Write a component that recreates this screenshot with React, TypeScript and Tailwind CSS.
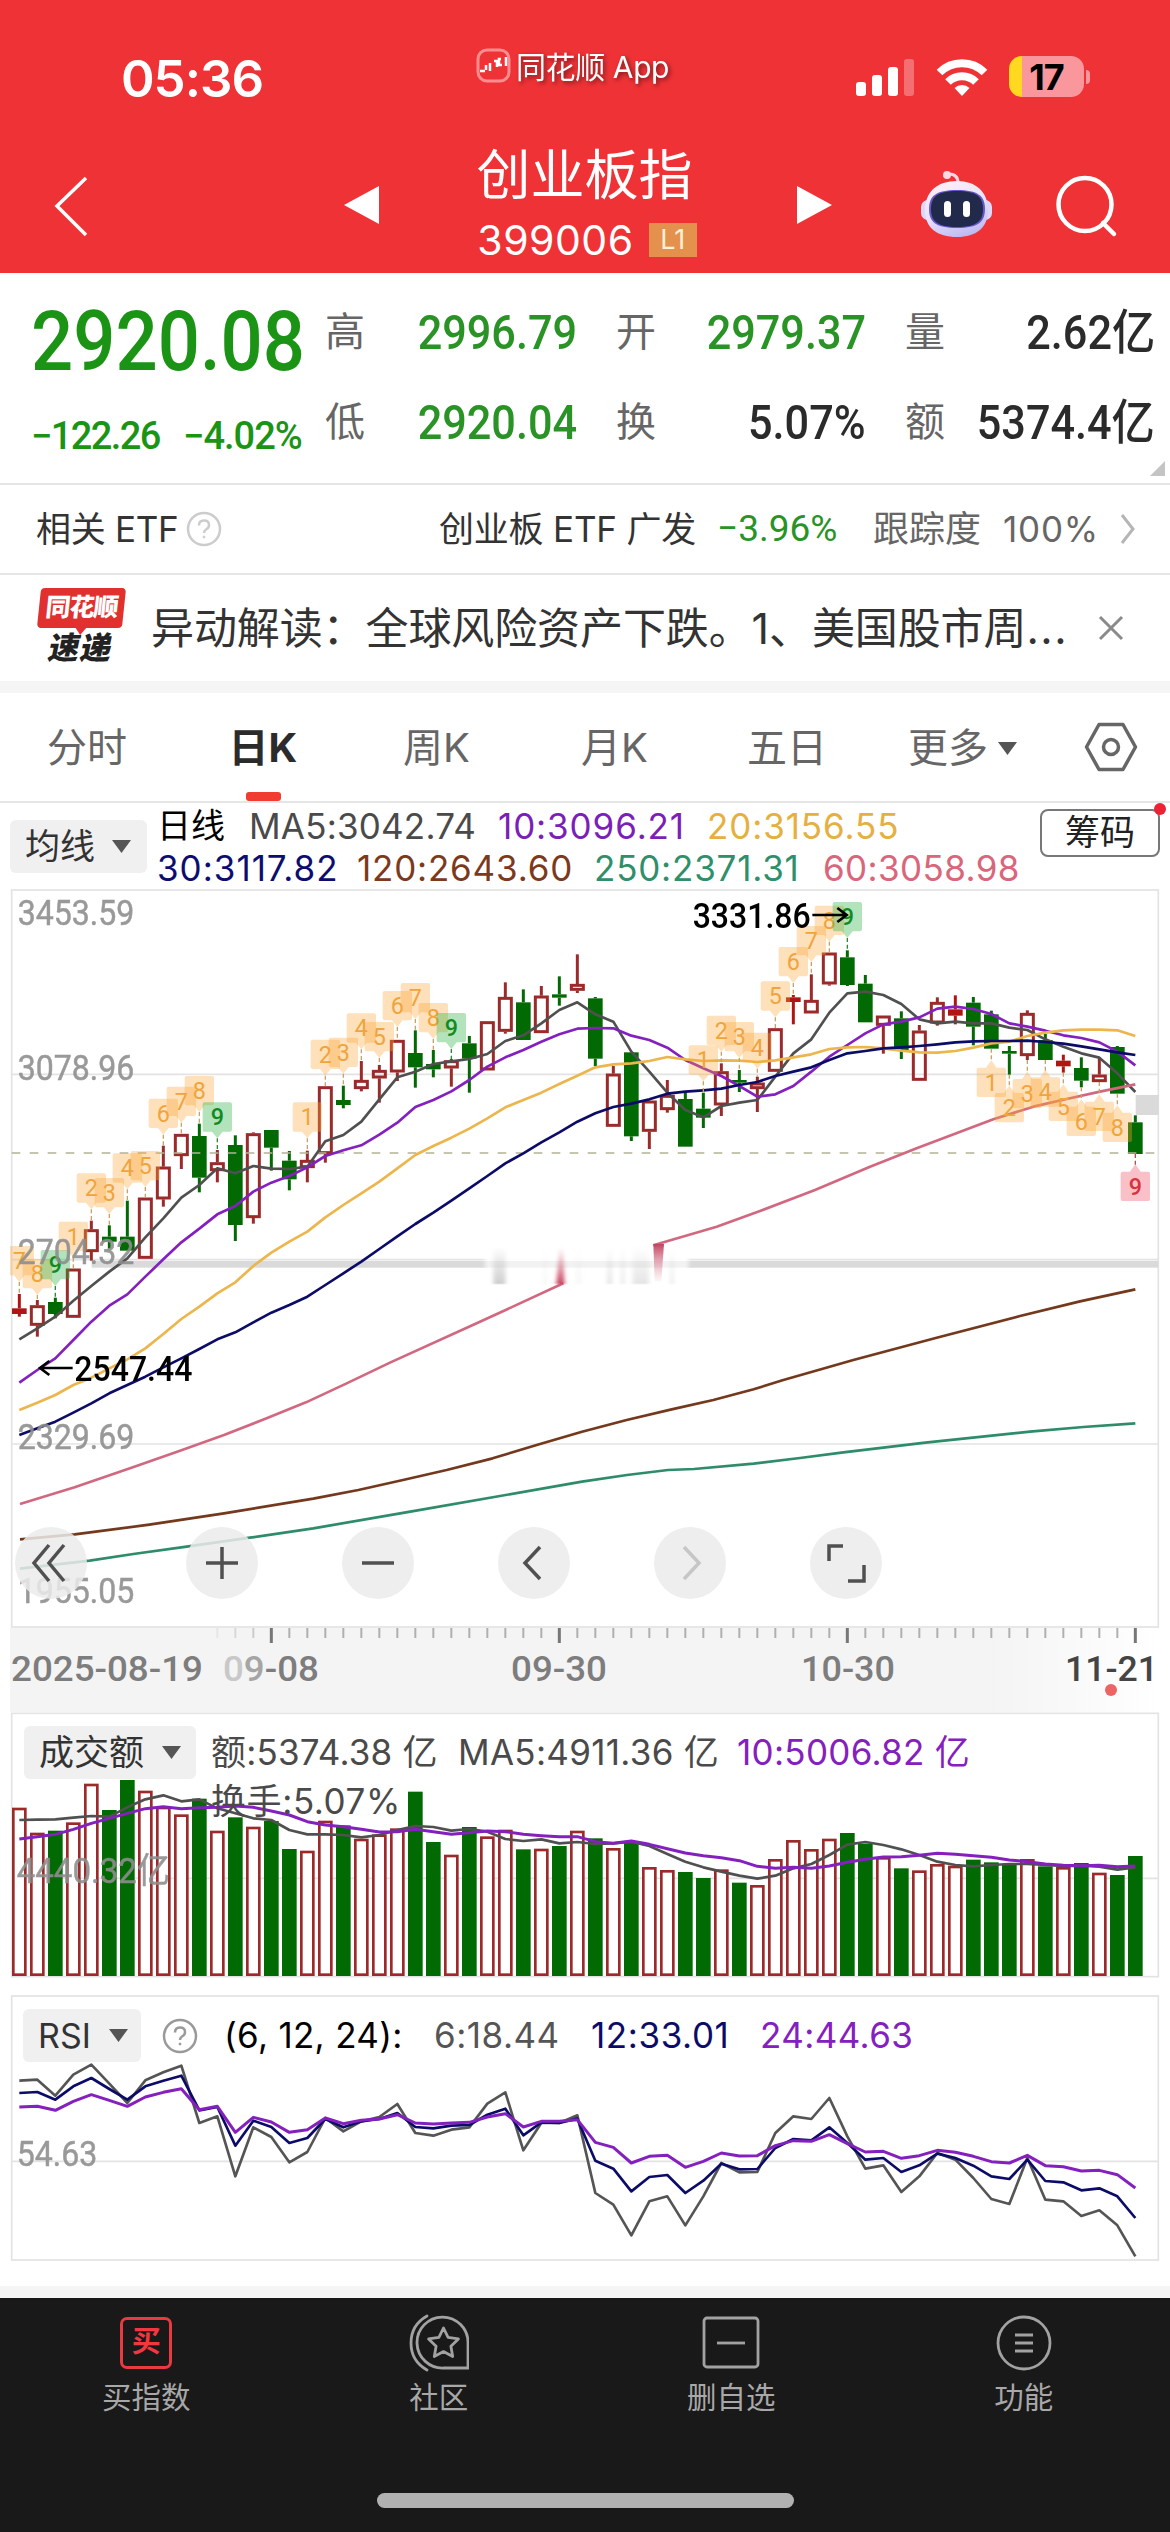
import type { ReactNode } from 'react';

type Candle = [kind: 'r' | 'g' | 'x', high: number, top: number, bottom: number, low: number];

// One chart unit is a third of a pixel; y grows downwards.
const STEP = 54;
const X0 = 58;
const BAR = 44;
const cx = (i: number) => X0 + i * STEP;

// r = hollow red, g = solid green, x = solid red
const candles: Candle[] = [
  ['x', 1242, 1285, 1302, 1310],
  ['r', 1260, 1276, 1337, 1370],
  ['g', 1253, 1266, 1302, 1315],
  ['r', 1166, 1166, 1313, 1313],
  ['r', 1022, 1048, 1116, 1142],
  ['g', 1036, 1070, 1085, 1106],
  ['g', 962, 1070, 1112, 1112],
  ['r', 953, 953, 1136, 1136],
  ['r', 797, 860, 958, 980],
  ['r', 762, 762, 828, 867],
  ['g', 731, 768, 893, 937],
  ['r', 810, 847, 873, 907],
  ['g', 766, 795, 1035, 1083],
  ['r', 757, 760, 1014, 1031],
  ['g', 750, 750, 803, 872],
  ['g', 813, 842, 898, 931],
  ['r', 812, 840, 864, 907],
  ['r', 619, 619, 822, 848],
  ['g', 617, 660, 675, 685],
  ['r', 543, 600, 627, 634],
  ['r', 555, 570, 595, 668],
  ['r', 480, 480, 577, 603],
  ['g', 451, 519, 562, 623],
  ['g', 510, 552, 568, 592],
  ['r', 537, 541, 565, 620],
  ['g', 468, 490, 536, 638],
  ['r', 424, 424, 571, 571],
  ['r', 307, 351, 455, 461],
  ['g', 328, 367, 480, 480],
  ['r', 318, 347, 459, 459],
  ['g', 289, 343, 353, 377],
  ['r', 223, 312, 332, 339],
  ['g', 351, 355, 536, 558],
  ['r', 558, 581, 740, 740],
  ['g', 517, 517, 769, 783],
  ['r', 662, 662, 755, 807],
  ['r', 600, 645, 690, 698],
  ['g', 636, 657, 800, 800],
  ['g', 638, 686, 713, 744],
  ['r', 550, 574, 676, 708],
  ['g', 570, 600, 608, 636],
  ['r', 590, 608, 627, 696],
  ['r', 445, 445, 575, 575],
  ['x', 345, 352, 366, 433],
  ['r', 283, 360, 400, 400],
  ['r', 218, 218, 313, 317],
  ['g', 211, 232, 315, 318],
  ['g', 285, 311, 427, 427],
  ['r', 407, 407, 437, 521],
  ['g', 394, 415, 510, 537],
  ['r', 435, 452, 602, 602],
  ['r', 352, 366, 430, 437],
  ['x', 346, 388, 407, 433],
  ['g', 351, 368, 440, 496],
  ['g', 392, 403, 506, 506],
  ['g', 498, 513, 521, 584],
  ['r', 391, 399, 528, 540],
  ['g', 462, 480, 540, 540],
  ['x', 524, 542, 559, 578],
  ['g', 532, 564, 602, 622],
  ['r', 532, 584, 606, 606],
  ['g', 498, 501, 641, 641],
  ['g', 706, 727, 822, 822],
];

const ma5 = [
  1378, 1345, 1310, 1262, 1218, 1175, 1135, 1072, 1015, 953, 915, 865, 880, 858, 866, 867, 860, 784, 765, 725, 658,
  592, 575, 552, 544, 537, 522, 483, 466, 430, 390, 367, 403, 425, 515, 575, 638, 690, 712, 678, 668, 660, 590, 520,
  478, 398, 340, 335, 345, 372, 418, 430, 425, 430, 430, 443, 450, 478, 500, 520, 533, 580, 636,
];
const ma10 = [
  1508, 1470, 1435, 1380, 1325, 1277, 1243, 1190, 1138, 1087, 1046, 1003, 978, 935, 908, 888, 862, 828, 811, 796, 764,
  728, 681, 660, 634, 600, 560, 532, 510, 485, 463, 446, 444, 445, 467, 480, 503, 540, 565, 588, 618, 650, 643, 618,
  575, 530, 495, 460, 433, 425, 412, 386, 380, 387, 402, 430, 440, 452, 466, 474, 487, 515, 556,
];
const ma20 = [
  1590, 1568, 1545, 1515, 1493, 1465, 1438, 1405, 1362, 1317, 1280, 1240, 1207, 1158, 1118, 1085, 1055, 1012, 975,
  940, 905, 865, 825, 798, 773, 746, 715, 682, 660, 638, 612, 587, 562, 553, 550, 543, 531, 538, 543, 541, 542, 546,
  541, 532, 523, 507, 502, 501, 505, 512, 517, 518, 513, 503, 490, 485, 468, 458, 451, 449, 449, 451, 468,
];
const ma30 = [
  1665, 1645, 1625, 1598, 1570, 1540, 1515, 1490, 1462, 1435, 1407, 1378, 1357, 1327, 1298, 1275, 1250, 1215, 1180,
  1145, 1107, 1069, 1032, 998, 962, 925, 888, 850, 820, 787, 757, 725, 700, 681, 671, 658, 641, 635, 631, 626, 615,
  606, 588, 575, 562, 540, 520, 513, 505, 502, 498, 493, 487, 484, 483, 483, 482, 486, 491, 499, 508, 517, 525,
];

const ma60a = '60,1872 224,1822 403,1760 540,1712 672,1665 800,1615 918,1567 1040,1510 1170,1448 1430,1330 1690,1210';
const ma60b = '1960,1096 2150,1040 2280,993 2445,930 2610,860 2750,805 2980,718 3100,680 3200,657 3300,635 3406,613';
const ma120 =
  '60,1978 224,1963 448,1934 672,1900 940,1856 1075,1830 1209,1800 1340,1770 1478,1735 1610,1695 1746,1655 1880,1620 2015,1588 2140,1560 2261,1528 2350,1500 2463,1468 2560,1440 2810,1373 3060,1308 3240,1264 3406,1228';
const ma250 =
  '60,2066 269,2042 400,2022 560,2000 750,1973 940,1945 1231,1895 1500,1848 1746,1805 1881,1785 2004,1770 2082,1767 2261,1751 2400,1734 2530,1717 2776,1688 3090,1655 3250,1641 3406,1630';

type Tag = [index: number, label: number, top: number, tone?: 'green' | 'red'];

const tagsAbove: Tag[] = [
  [0, 7, 1098],
  [1, 8, 1137],
  [2, 9, 1110, 'green'],
  [3, 1, 1025],
  [4, 2, 880],
  [5, 3, 894],
  [6, 4, 820],
  [7, 5, 813],
  [8, 6, 656],
  [9, 7, 620],
  [10, 8, 588],
  [11, 9, 667, 'green'],
  [16, 1, 667],
  [17, 2, 479],
  [18, 3, 473],
  [19, 4, 400],
  [20, 5, 426],
  [21, 6, 333],
  [22, 7, 309],
  [23, 8, 369],
  [24, 9, 399, 'green'],
  [38, 1, 496],
  [39, 2, 407],
  [40, 3, 426],
  [41, 4, 458],
  [42, 5, 304],
  [43, 6, 201],
  [44, 7, 138],
  [45, 8, 77],
  [46, 9, 66, 'green'],
];
const tagsBelow: Tag[] = [
  [54, 1, 563],
  [55, 2, 639],
  [56, 3, 597],
  [57, 4, 592],
  [58, 5, 635],
  [59, 6, 680],
  [60, 7, 665],
  [61, 8, 698],
  [62, 9, 875, 'red'],
];

const volumes = [
  323, 398, 392, 367, 251, 330, 240, 272, 320, 343, 296, 392, 352, 380, 363, 447, 452, 362, 376, 416, 403, 385, 275,
  426, 464, 381, 409, 389, 448, 446, 438, 392, 415, 444, 428, 501, 510, 516, 534, 508, 548, 555, 477, 420, 447, 416,
  399, 431, 471, 505, 511, 492, 497, 479, 487, 495, 477, 499, 501, 489, 518, 525, 468,
];
const volMa5 = [
  360, 359, 358, 353, 348, 350, 322, 298, 286, 304, 298, 325, 340, 355, 360, 390, 403, 403, 405, 412, 405, 390, 378,
  381, 392, 387, 395, 417, 423, 418, 430, 426, 432, 430, 425, 438, 462, 485, 502, 515, 527, 536, 527, 505, 492, 465,
  434, 426, 435, 448, 465, 485, 495, 499, 495, 492, 492, 495, 498, 497, 500, 509, 502,
];
const volMa10 = [
  417, 410, 403, 388, 370, 355, 340, 326, 320, 326, 323, 322, 318, 322, 333, 345, 365, 375, 380, 388, 396, 395, 388,
  395, 403, 398, 393, 395, 403, 407, 410, 410, 425, 430, 423, 433, 446, 459, 467, 473, 482, 499, 505, 502, 505, 498,
  487, 478, 471, 470, 466, 460, 463, 467, 472, 480, 485, 492, 496, 497, 496, 500, 498,
];

const rsi6 = [
  303, 300, 348, 285, 255, 312, 370, 302, 278, 258, 430, 410, 590, 443, 472, 548, 517, 415, 455, 425, 412, 373, 460,
  468, 450, 443, 372, 338, 512, 430, 430, 407, 640, 675, 767, 665, 650, 737, 650, 550, 578, 577, 460, 410, 418, 355,
  470, 567, 557, 637, 590, 520, 540, 595, 658, 673, 535, 660, 665, 709, 692, 737, 830,
];
const rsi12 = [
  340, 337, 360, 320, 295, 328, 360, 320, 303, 288, 392, 382, 498, 423, 442, 490, 475, 418, 443, 425, 418, 400, 442,
  446, 438, 436, 405, 387, 467, 428, 430, 417, 543, 567, 635, 592, 586, 640, 603, 552, 569, 568, 505, 478, 482, 443,
  490, 540, 535, 577, 557, 522, 535, 558, 590, 598, 540, 604, 608, 632, 626, 650, 715,
];
const rsi24 = [
  382, 380, 392, 365, 345, 362, 380, 352, 338, 327, 390, 380, 458, 413, 427, 458, 450, 415, 432, 422, 418, 405, 430,
  433, 430, 428, 412, 402, 442, 425, 425, 420, 488, 503, 550, 530, 527, 563, 545, 520, 529, 528, 498, 483, 485, 465,
  492, 517, 515, 536, 528, 512, 518, 530, 546, 550, 527, 558, 561, 574, 572, 585, 625,
];

const RED = '#9c2a2a';
const GREEN = '#026a02';

function Line({ data, color, width = 8 }: { data: number[]; color: string; width?: number }) {
  return (
    <polyline
      points={data.map((y, i) => `${cx(i)},${y}`).join(' ')}
      fill="none"
      stroke={color}
      strokeWidth={width}
      strokeLinejoin="round"
    />
  );
}

function CandleBar({ candle, index }: { candle: Candle; index: number }) {
  const [kind, high, top, bottom, low] = candle;
  const x = cx(index);
  const color = kind === 'g' ? GREEN : kind === 'x' ? '#b01414' : RED;
  return (
    <g stroke={color} strokeWidth={9}>
      {high < top && <line x1={x} x2={x} y1={high} y2={top} />}
      {low > bottom && <line x1={x} x2={x} y1={bottom} y2={low} />}
      {kind === 'r' ? (
        <rect x={x - BAR / 2 + 4} y={top + 4} width={BAR - 8} height={bottom - top - 8} fill="none" />
      ) : (
        <rect x={x - BAR / 2} y={top} width={BAR} height={bottom - top} fill={color} stroke="none" />
      )}
    </g>
  );
}

function TagMark({ tag, below }: { tag: Tag; below?: boolean }) {
  const [i, label, top, tone] = tag;
  const x = cx(i);
  const fill = tone === 'green' ? '#22b03c' : tone === 'red' ? '#f04a5e' : '#fba53a';
  const color = tone === 'green' ? '#128a22' : tone === 'red' ? '#d8323f' : '#f0a43c';
  const [, high, , , low] = candles[i];
  return (
    <g>
      <g fill={fill} opacity={0.35}>
        <path
          d={
            below
              ? `M${x - 38} ${top}h22l16 -22l16 22h22q6 0 6 6v76q0 6 -6 6h-76q-6 0 -6 -6v-76q0 -6 6 -6z`
              : `M${x - 38} ${top}h76q6 0 6 6v76q0 6 -6 6h-22l-16 20l-16 -20h-22q-6 0 -6 -6v-76q0 -6 6 -6z`
          }
        />
      </g>
      <line
        x1={x}
        x2={x}
        y1={below ? low : top + 108}
        y2={below ? top - 20 : high}
        stroke={tone === 'green' ? '#2a8a3a' : tone === 'red' ? '#b05050' : '#c9a268'}
        strokeWidth={4}
        strokeDasharray="12 8"
      />
      <text
        x={x}
        y={top + 69}
        textAnchor="middle"
        fontSize={70}
        fontFamily="Roboto"
        fill={color}
        fontWeight={tone ? 500 : 400}
      >
        {label}
      </text>
    </g>
  );
}

function AxisLabel({ y, x = 53, length = 350, children }: { y: number; x?: number; length?: number; children: ReactNode }) {
  return (
    <text
      x={x}
      y={y}
      textLength={length}
      lengthAdjust="spacingAndGlyphs"
      fontSize={107}
      fontFamily="Roboto, 'Noto Sans CJK SC'"
      fill="#8e8e8e"
      stroke="#8e8e8e"
      strokeWidth="1.500"
      opacity={0.9}
    >
      {children}
    </text>
  );
}

function Caret({ className = '' }: { className?: string }) {
  return (
    <svg className={`w-[19px] h-[13px] ${className}`} viewBox="0 0 19 13">
      <path d="M0 0h19l-9.500 13z" fill="#555" />
    </svg>
  );
}

function Help({ color, className = '' }: { color: string; className?: string }) {
  return (
    <svg className={`w-9 h-9 ${className}`} viewBox="0 0 36 36" fill="none" stroke={color} strokeWidth="2.500">
      <circle cx="18" cy="18" r="16" />
      <path d="M13 14.500q0 -5 5 -5t5 4.500q0 3 -3 4.500q-2 1.200 -2 3.500" />
      <circle cx="18" cy="26" r="1" fill={color} strokeWidth="1" />
    </svg>
  );
}

function StatusBar() {
  return (
    <div className="flex h-[116px] text-white">
      <div className="w-[384px] pt-[48px] text-center text-[51px] leading-[62px] font-semibold tracking-[-1px]">05:36</div>
      <div className="w-[396px] pl-[92px] pt-[47px] flex items-start gap-[5px]">
        <svg className="w-[35px] h-[36px]" viewBox="0 0 35 36" fill="none">
          <rect x="2" y="3" width="31" height="31" rx="9" stroke="#ff8d8d" strokeWidth="3" />
          <path d="M4 24h5M10 18v5M14 16v8M18 14h3v6M25 12h-2v6h3M30 10v9" stroke="#fff" strokeWidth="2.500" />
        </svg>
        <span className="text-[30px] leading-[40px] tracking-[-0.4px] whitespace-nowrap drop-shadow-[2px_2px_2px_rgba(0,0,0,0.5)]">同花顺 App</span>
      </div>
      <div className="flex pt-[56px] pl-[76px]">
        <svg className="w-[58px] h-[42px]" viewBox="0 0 58 42" fill="#fff">
          <rect x="0" y="26" width="10" height="14" rx="3" />
          <rect x="16" y="19" width="10" height="21" rx="3" />
          <rect x="32" y="11" width="10" height="29" rx="3" />
          <rect x="48" y="3" width="10" height="37" rx="3" opacity="0.3" />
        </svg>
        <svg className="ml-[22px] w-[52px] h-[42px]" viewBox="0 0 52 42" fill="none" stroke="#fff" strokeWidth="8">
          <path d="M3.500 16.500a32 32 0 0 1 45 0" />
          <path d="M12 26a20 20 0 0 1 28 0" />
          <path d="M26 40l-7.500 -8a11 11 0 0 1 15 0z" fill="#fff" stroke="none" />
        </svg>
        <div className="ml-[21px] w-[75px] h-[41px] rounded-[13px] bg-linear-to-r from-[#ffd91f] from-[13px] to-[#f9979c] to-[13px] text-center text-[36px] leading-[42px] font-bold text-black tracking-[-1px]">
          17
        </div>
        <div className="ml-[2px] mt-[14px] w-[4px] h-[14px] rounded-r-full bg-[#f9979c]"></div>
      </div>
    </div>
  );
}

function Robot() {
  return (
    <svg className="w-[74px] h-[72px]" viewBox="0 0 74 72" fill="none">
      <defs>
        <linearGradient id="helmet" x1="0.3" y1="0" x2="0.7" y2="1">
          <stop offset="0" stopColor="#fdeef6" />
          <stop offset="0.5" stopColor="#e8e2fc" />
          <stop offset="1" stopColor="#bcb6f2" />
        </linearGradient>
      </defs>
      <path d="M38 16q0 -9 -9 -9" stroke="#fbd5e2" strokeWidth="3" strokeLinecap="round" />
      <circle cx="27" cy="8" r="4" fill="#ffd9df" />
      <rect x="1" y="33" width="14" height="20" rx="7" fill="#ddd8fa" />
      <rect x="58" y="33" width="14" height="20" rx="7" fill="#ddd8fa" />
      <path d="M37 14C56 14 68 25 68 43C68 61 56 70 37 70C17 70 5 61 5 43C5 25 17 14 37 14z" fill="url(#helmet)" />
      <path d="M37 23C58 23 65 29 65 42C65 55 58 61 37 61C16 61 9 55 9 42C9 29 16 23 37 23z" fill="#6657c8" />
      <path d="M37 24C57 24 63 30 63 42C63 54 57 60 37 60C17 60 11 54 11 42C11 30 17 24 37 24z" fill="#212a4b" />
      <rect x="24" y="34" width="7" height="16" rx="3.500" fill="#fff" />
      <rect x="43" y="34" width="7" height="16" rx="3.500" fill="#fff" />
    </svg>
  );
}

function Header() {
  return (
    <header className="h-[273px] bg-[#ef3236]">
      <StatusBar />
      <div className="flex h-[157px] text-white">
        <svg className="mt-[58px] ml-[53px] w-[36px] h-[64px]" viewBox="0 0 36 64" fill="none" stroke="#fff" strokeWidth="3.500">
          <path d="M33 4L4 32L33 61" />
        </svg>
        <svg className="mt-[70px] ml-[255px] w-[36px] h-[38px]" viewBox="0 0 36 38" fill="#fff">
          <path d="M35 0v38L0 19z" />
        </svg>
        <div className="w-[416px] pr-[7px] pt-[27px] flex flex-col items-center">
          <h1 className="text-[54px] leading-[66px] font-normal">创业板指</h1>
          <div className="flex items-center gap-[15px] h-[50px] mt-[6px] ml-[5px]">
            <span className="text-[41px] leading-[50px] tracking-[0.5px]">399006</span>
            <span className="w-[48px] h-[34px] bg-[#e5914e] text-[#fff0d8] text-[27px] leading-[34px] text-center">L1</span>
          </div>
        </div>
        <svg className="mt-[70px] w-[36px] h-[38px]" viewBox="0 0 36 38" fill="#fff">
          <path d="M1 0v38L36 19z" />
        </svg>
        <div className="ml-[88px] mt-[51px]">
          <Robot />
        </div>
        <svg className="ml-[60px] mt-[58px] w-[64px] h-[64px]" viewBox="0 0 64 64" fill="none" stroke="#fff" strokeWidth="4.500">
          <circle cx="31" cy="30.500" r="26.500" />
          <path d="M49 49L60 60" strokeLinecap="round" />
        </svg>
      </div>
    </header>
  );
}

function Stat({ label, value, color }: { label: string; value: string; color: string }) {
  return (
    <div className="flex justify-between items-center h-[60px]">
      <span className="text-[40px] text-[#666]">{label}</span>
      <span className={`inline-block origin-right scale-x-90 -mr-[2px] text-[48px] leading-[60px] font-medium whitespace-nowrap ${color}`}>
        {value}
      </span>
    </div>
  );
}

function Quote() {
  return (
    <section className="relative h-[212px] border-b-2 border-[#e6e6e6] flex font-[Roboto,'Noto_Sans_CJK_SC']">
      <div className="w-[325px] pl-[31px] pt-[27px] text-[#1b9416]">
        <div className="w-[294px] h-[84px] origin-left scale-x-[.895] text-[83px] leading-[84px] font-medium">2920.08</div>
        <div className="flex mt-[31px] text-[38px] leading-[42px] font-medium">
          <span className="w-[152px] whitespace-nowrap tracking-[-1.6px]">−122.26</span>
          <span className="whitespace-nowrap tracking-[-1px]">−4.02%</span>
        </div>
      </div>
      <div className="w-[828px] pt-[30px] grid grid-cols-[250px_248px_248px] gap-x-[41px] gap-y-[30px] content-start">
        <Stat label="高" value="2996.79" color="text-[#2a9326]" />
        <Stat label="开" value="2979.37" color="text-[#2a9326]" />
        <Stat label="量" value="2.62亿" color="text-[#2b2b2b]" />
        <Stat label="低" value="2920.04" color="text-[#2a9326]" />
        <Stat label="换" value="5.07%" color="text-[#2b2b2b]" />
        <Stat label="额" value="5374.4亿" color="text-[#2b2b2b]" />
      </div>
      <svg className="absolute right-[5px] bottom-[7px] w-[15px] h-[15px]" viewBox="0 0 15 15" fill="#c4c4c4">
        <path d="M15 0v15H0z" />
      </svg>
    </section>
  );
}

function EtfRow() {
  return (
    <section className="h-[90px] border-b-2 border-[#e6e6e6] flex items-center text-[35px] text-[#333]">
      <span className="ml-[36px] w-[150px] whitespace-nowrap tracking-[-0.3px]">相关 ETF</span>
      <Help color="#ccc" />
      <span className="ml-[217px] w-[278px] whitespace-nowrap tracking-[-0.2px]">创业板 ETF 广发</span>
      <span className="w-[156px] text-[#2a9326] font-[Roboto] text-[37px]">−3.96%</span>
      <span className="w-[130px] text-[#666] text-[36px]">跟踪度</span>
      <span className="w-[117px] text-[#666] tracking-[0.8px]">100%</span>
      <svg className="w-[16px] h-[32px]" viewBox="0 0 16 32" fill="none" stroke="#b5b5b5" strokeWidth="3">
        <path d="M2 2L13 16L2 30" />
      </svg>
    </section>
  );
}

function NewsRow() {
  return (
    <section className="h-[106px] flex items-center">
      <div className="ml-[36px] w-[90px] h-[80px] flex flex-col items-center">
        <div className="relative w-[85px] h-[40px] -skew-x-6 rounded-[4px] bg-[#e0312f] text-white text-[25px] leading-[38px] font-black text-center tracking-[-1px]">
          同花顺
          <svg className="absolute left-[38px] top-[39px] w-[12px] h-[8px]" viewBox="0 0 12 8" fill="#e0312f">
            <path d="M0 0h12l-6 8z" />
          </svg>
        </div>
        <div className="-skew-x-12 mt-[3px] text-[31px] leading-[34px] font-black text-[#222] tracking-[1px]">速递</div>
      </div>
      <p className="ml-[25px] w-[947px] text-[43px] text-[#333] whitespace-nowrap tracking-[-0.1px]">
        异动解读：全球风险资产下跌。1、美国股市周<span className="tracking-[1.5px]">...</span>
      </p>
      <svg className="w-[26px] h-[26px]" viewBox="0 0 26 26" stroke="#8a8a8a" strokeWidth="3">
        <path d="M2 2L24 24M24 2L2 24" />
      </svg>
    </section>
  );
}

function PeriodTabs() {
  return (
    <nav className="h-[110px] border-b-2 border-[#e6e6e6] flex text-[40px] leading-[60px] text-[#666] pt-[25px]">
      <span className="ml-[47px] w-[181px]">分时</span>
      <div className="w-[70px] flex flex-col items-center mr-[105px]">
        <span className="font-bold text-[#2b2b2b] whitespace-nowrap">日K</span>
        <div className="mt-[14px] w-[35px] h-[9px] rounded-[3px] bg-[#f13c31]"></div>
      </div>
      <span className="w-[178px]">周K</span>
      <span className="w-[166px]">月K</span>
      <span className="w-[161px]">五日</span>
      <div className="flex items-center h-[60px] w-[176px]">
        更多
        <Caret className="ml-[10px]" />
      </div>
      <svg className="mt-[3px] w-[54px] h-[52px]" viewBox="0 0 54 52" fill="none" stroke="#666" strokeWidth="3.500">
        <path d="M15 3.500h24L51.500 26L39 48.500H15L2.500 26z" strokeLinejoin="round" />
        <circle cx="27" cy="26" r="7.500" />
      </svg>
    </nav>
  );
}

function MaLegend() {
  return (
    <div className="flex h-[85px] pl-[10px]">
      <div className="mt-[17px] w-[137px] h-[53px] rounded-[6px] bg-[#f0f0f0] flex items-center pl-[15px] text-[35px] text-[#333]">
        均线
        <Caret className="ml-[17px]" />
      </div>
      <div className="ml-[10px] pt-[2px] w-[883px] text-[35px] leading-[42px] whitespace-nowrap text-[#4a4a4a]">
        <div className="flex h-[42px]">
          <span className="w-[92px] text-[34px] text-black">日线</span>
          <span className="w-[249px] tracking-[0.2px]">MA5:3042.74</span>
          <span className="w-[209px] text-[#7b1fb8] tracking-[0.9px]">10:3096.21</span>
          <span className="text-[#e6b040] tracking-[0.9px]">20:3156.55</span>
        </div>
        <div className="flex h-[42px]">
          <span className="w-[200px] text-[#0d0d70] tracking-[1px]">30:3117.82</span>
          <span className="w-[237px] text-[#7b3a1c] tracking-[0.8px]">120:2643.60</span>
          <span className="w-[229px] text-[#2f8f6b] tracking-[0.8px]">250:2371.31</span>
          <span className="text-[#d9667a] tracking-[0.4px]">60:3058.98</span>
        </div>
      </div>
      <div className="relative mt-[6px] w-[120px] h-[48px] border-2 border-[#777] rounded-[8px] text-center text-[35px] leading-[43px] text-[#222]">
        筹码
        <div className="absolute -right-[8px] -top-[8px] w-[12px] h-[12px] rounded-full bg-[#ec2236]"></div>
      </div>
    </div>
  );
}

const smears: [x: number, width: number, color: string, opacity: number][] = [
  [1480, 36, '#777', 0.36],
  [1630, 10, '#999', 0.1],
  [1730, 12, '#999', 0.1],
  [1822, 14, '#777', 0.2],
  [1862, 12, '#777', 0.15],
  [1898, 48, '#888', 0.22],
  [2010, 12, '#888', 0.15],
];

const controls = [
  'M34 18L19 36L34 54M49 18L34 36L49 54',
  'M20 36H52M36 20V52',
  'M20 36H52',
  'M42 20L27 36L42 52',
  'M30 20L45 36L30 52',
  'M19 34V19H33M54 38V54H38',
];
const controlSpots = ['ml-[5px]', 'ml-[99px]', 'ml-[84px]', 'ml-[84px]', 'ml-[84px]', 'ml-[84px]'];

function KChart() {
  return (
    <div className="relative ml-[10px] w-[1150px] h-[740px]">
      <svg className="block w-[1150px] h-[740px]" viewBox="30 24 3450 2220">
        <defs>
          <linearGradient id="smear" x1="0" y1="0" x2="0" y2="1">
            <stop offset="0" stopColor="#fff" stopOpacity="0" />
            <stop offset="0.5" stopColor="#fff" stopOpacity="0.5" />
            <stop offset="1" stopColor="#fff" stopOpacity="1" />
          </linearGradient>
          <mask id="fadeDown">
            <rect x="1400" y="1100" width="800" height="112" fill="url(#smear)" />
          </mask>
          <linearGradient id="drop" x1="0" y1="0" x2="0" y2="1">
            <stop offset="0" stopColor="#c04460" />
            <stop offset="1" stopColor="#e8a0b0" stopOpacity="0.1" />
          </linearGradient>
          <filter id="soft" x="-100%" y="-20%" width="300%" height="140%">
            <feGaussianBlur stdDeviation="6 3" />
          </filter>
        </defs>
        <g stroke="#e3e3e3" strokeWidth="5" fill="none">
          <rect x="35" y="30" width="3440" height="2211" />
          <path d="M35 583H3475M35 1139H3475M35 1692H3475" />
        </g>
        {candles.map((c, i) => (
          <CandleBar key={i} candle={c} index={i} />
        ))}
        <line x1="35" x2="3475" y1="819" y2="819" stroke="#b4b296" strokeWidth="5" strokeDasharray="26 28" />
        <rect x="275" y="1143" width="3200" height="20" fill="#dadada" />
        <rect x="3407" y="645" width="69" height="60" fill="#dadada" />
        <Line data={ma5} color="#505050" />
        <Line data={ma10} color="#8420bd" />
        <Line data={ma20} color="#ecb64c" />
        <Line data={ma30} color="#0c0c68" />
        <g fill="none" strokeWidth={8} strokeLinejoin="round">
          <polyline points={ma60a} stroke="#d16880" />
          <polyline points={ma60b} stroke="#d16880" />
          <polyline points={ma120} stroke="#74391c" />
          <polyline points={ma250} stroke="#2f8c6b" />
        </g>
        <rect x="1455" y="1128" width="610" height="60" fill="#fff" opacity="0.96" filter="url(#soft)" />
        <rect x="1440" y="1143" width="640" height="20" fill="#dadada" opacity="0.3" />
        <g mask="url(#fadeDown)">
          {smears.map(([x, width, color, opacity]) => (
            <rect key={x} x={x} y="1100" width={width} height="120" fill={color} opacity={opacity} filter="url(#soft)" />
          ))}
          <path d="M1680 1100h8l6 120h-26z" fill="#c8405c" filter="url(#soft)" />
        </g>
        <path d="M1960 1092h32l-8 112h-20z" fill="url(#drop)" />
        {tagsAbove.map((t) => (
          <TagMark key={t[0]} tag={t} />
        ))}
        {tagsBelow.map((t) => (
          <TagMark key={t[0]} tag={t} below />
        ))}
        <AxisLabel y={134}>3453.59</AxisLabel>
        <AxisLabel y={599}>3078.96</AxisLabel>
        <AxisLabel y={1152}>2704.32</AxisLabel>
        <AxisLabel y={1708}>2329.69</AxisLabel>
        <AxisLabel y={2170}>1955.05</AxisLabel>
        <g fontFamily="Roboto" fontWeight={500} fontSize={107} fill="#000">
          <text x="2078" y="144" textLength="354" lengthAdjust="spacingAndGlyphs">3331.86</text>
          <text x="223" y="1503" textLength="354" lengthAdjust="spacingAndGlyphs">2547.44</text>
        </g>
        <g stroke="#000" strokeWidth="8" fill="none">
          <path d="M2437 105H2538M2512 84L2540 105L2512 126" />
          <path d="M218 1464H122M148 1443L120 1464L148 1485" />
        </g>
      </svg>
      {/* floating zoom / pan buttons */}
      <div className="absolute left-0 top-[639px] flex">
        {controls.map((d, i) => (
          <div key={d} className={`w-[72px] h-[72px] rounded-full bg-[#ebebeb]/85 ${controlSpots[i]}`}>
            <svg viewBox="0 0 72 72" fill="none" stroke={i === 4 ? '#c6c6c6' : '#505050'} strokeWidth="3.500">
              <path d={d} />
            </svg>
          </div>
        ))}
      </div>
    </div>
  );
}

function Timeline() {
  return (
    <div className="ml-[10px] w-[1150px] h-[84px] bg-linear-to-r from-[#f4f4f4] from-85% to-white">
      <svg className="block w-[1150px] h-[84px]" viewBox="10 0 1150 84" fontFamily="Roboto" fontSize="35">
        {Array.from({ length: 52 }, (_, k) => k + 11).map((i) => {
          const major = (i - 14) % 16 === 0;
          const x = cx(i) / 3;
          return (
            <line
              key={i}
              x1={x}
              x2={x}
              y1="0"
              y2={major ? 15 : 10}
              stroke={major ? '#777' : '#b0b0b0'}
              strokeWidth={major ? 3 : 2}
              opacity={i < 14 ? (i - 10) / 5 : 1}
            />
          );
        })}
        <g fill="#7d7d7d" fontWeight="500">
          <text x="11" y="53" textLength="192" lengthAdjust="spacingAndGlyphs">2025-08-19</text>
          <text x="223" y="53" textLength="96" lengthAdjust="spacingAndGlyphs">
            <tspan fill="#c8c8c8">0</tspan>
            <tspan fill="#a5a5a5">9</tspan>-08
          </text>
          <text x="511" y="53" textLength="96" lengthAdjust="spacingAndGlyphs">09-30</text>
          <text x="801" y="53" textLength="94" lengthAdjust="spacingAndGlyphs">10-30</text>
          <text x="1065" y="53" textLength="93" lengthAdjust="spacingAndGlyphs" fill="#444">11-21</text>
        </g>
        <circle cx="1111" cy="62" r="6" fill="#ec6464" />
      </svg>
    </div>
  );
}

function VolumePanel() {
  return (
    <div className="relative ml-[10px] w-[1150px] h-[266px]">
      <svg className="block w-[1150px] h-[266px]" viewBox="30 36 3450 798">
        <g stroke="#e3e3e3" strokeWidth="5" fill="none">
          <rect x="35" y="40" width="3440" height="790" />
          <path d="M35 535H3475" />
        </g>
        {volumes.map((top, i) =>
          candles[i][0] === 'g' ? (
            <rect key={i} x={cx(i) - 22} y={top} width={44} height={828 - top} fill={GREEN} />
          ) : (
            <rect key={i} x={cx(i) - 18} y={top + 4} width={36} height={820 - top} fill="#fff" stroke={RED} strokeWidth={8} />
          ),
        )}
        <Line data={volMa5} color="#505050" />
        <Line data={volMa10} color="#8420bd" width={9} />
        <AxisLabel y={548} x={50} length={460}>4440.32亿</AxisLabel>
      </svg>
      <div className="absolute left-0 top-0 pl-[14px] pt-[14px] text-[35px] whitespace-nowrap text-[#4a4a4a]">
        <div className="flex items-center h-[53px]">
          <div className="w-[172px] h-[53px] rounded-[6px] bg-[#f0f0f0] flex items-center pl-[15px] text-[#333]">
            成交额
            <Caret className="ml-[18px]" />
          </div>
          <span className="ml-[15px] w-[247px] tracking-[0.2px]">额:5374.38 亿</span>
          <span className="w-[279px] tracking-[0.3px]">MA5:4911.36 亿</span>
          <span className="text-[#8420bd] tracking-[0.3px]">10:5006.82 亿</span>
        </div>
        <div className="ml-[187px] -mt-[3px] leading-[50px] tracking-[0.6px]">换手:5.07%</div>
      </div>
    </div>
  );
}

function RsiPanel() {
  return (
    <div className="relative ml-[10px] mt-[17px] w-[1150px] h-[266px]">
      <svg className="block w-[1150px] h-[266px]" viewBox="30 46 3450 798">
        <g stroke="#e3e3e3" strokeWidth="5" fill="none">
          <rect x="35" y="49" width="3440" height="792" />
          <path d="M35 545H3475" />
        </g>
        <Line data={rsi6} color="#555" />
        <Line data={rsi12} color="#0c0c68" />
        <Line data={rsi24} color="#8420bd" width={9} />
        <AxisLabel y={558} x={50} length={242}>54.63</AxisLabel>
      </svg>
      <div className="absolute left-[13px] top-[14px] flex items-center h-[53px] text-[35px] whitespace-nowrap">
        <div className="w-[118px] h-[53px] rounded-[6px] bg-[#f0f0f0] flex items-center pl-[15px] text-[34px] text-[#333]">
          RSI
          <Caret className="ml-[18px]" />
        </div>
        <Help color="#9a9a9a" className="ml-[21px]" />
        <span className="ml-[26px] w-[210px] text-black tracking-[0.3px]">(6, 12, 24):</span>
        <span className="w-[157px] text-[#555] tracking-[0.5px]">6:18.44</span>
        <span className="w-[169px] text-[#0c0c68] tracking-[0.6px]">12:33.01</span>
        <span className="text-[#8420bd] tracking-[0.4px]">24:44.63</span>
      </div>
    </div>
  );
}

function BottomBar() {
  const stroke = { fill: 'none', stroke: '#a2a2a2', strokeWidth: 2.8 };
  const items = [
    {
      label: '买指数',
      icon: (
        <div className="w-[52px] h-[52px] border-[3.5px] border-[#e83a3f] rounded-[7px] text-[29px] leading-[44px] font-bold text-[#f0383f] text-center">
          买
        </div>
      ),
    },
    {
      label: '社区',
      icon: (
        <svg className="w-[60px] h-[58px]" viewBox="0 0 60 58" {...stroke}>
          <path d="M59 54H35a25.500 25.500 0 1 1 24 -25z" />
          <path d="M18 2q-16 9 -16 27t16 27" strokeLinecap="round" />
          <path d="M34.500 14l4.600 9.400l10.300 1.500l-7.500 7.300l1.800 10.300l-9.200 -4.900l-9.200 4.900l1.800 -10.300l-7.500 -7.300l10.300 -1.500z" strokeLinejoin="round" />
        </svg>
      ),
    },
    {
      label: '删自选',
      icon: (
        <svg className="w-[58px] h-[54px]" viewBox="0 0 58 54" {...stroke}>
          <rect x="2" y="2" width="54" height="49" rx="3" />
          <path d="M15 27H43" />
        </svg>
      ),
    },
    {
      label: '功能',
      icon: (
        <svg className="w-[56px] h-[56px]" viewBox="0 0 56 56" {...stroke}>
          <circle cx="28" cy="28" r="26" />
          <path d="M19 20H37M19 28H37M19 36H37" />
        </svg>
      ),
    },
  ];
  return (
    <footer className="h-[234px] bg-[#191919] flex flex-col items-center">
      <div className="w-full h-[195px] pt-[16px] grid grid-cols-4">
        {items.map((item) => (
          <div key={item.label} className="flex flex-col items-center">
            <div className="h-[58px] flex items-center">{item.icon}</div>
            <span className="mt-[3px] text-[29.5px] leading-[44px] text-[#a8a8a8]">{item.label}</span>
          </div>
        ))}
      </div>
      <div className="w-[417px] h-[15px] rounded-full bg-[#b1b1b1]"></div>
    </footer>
  );
}

export default function App() {
  return (
    <div className="w-[1170px] h-[2532px] overflow-hidden bg-white font-[Inter,'Noto_Sans_CJK_SC',sans-serif]">
      <Header />
      <Quote />
      <EtfRow />
      <NewsRow />
      <div className="h-[12px] bg-[#f5f5f5]"></div>
      <PeriodTabs />
      <MaLegend />
      <KChart />
      <Timeline />
      <VolumePanel />
      <RsiPanel />
      <div className="mt-[25px] h-[12px] bg-[#f5f5f5]"></div>
      <BottomBar />
    </div>
  );
}
